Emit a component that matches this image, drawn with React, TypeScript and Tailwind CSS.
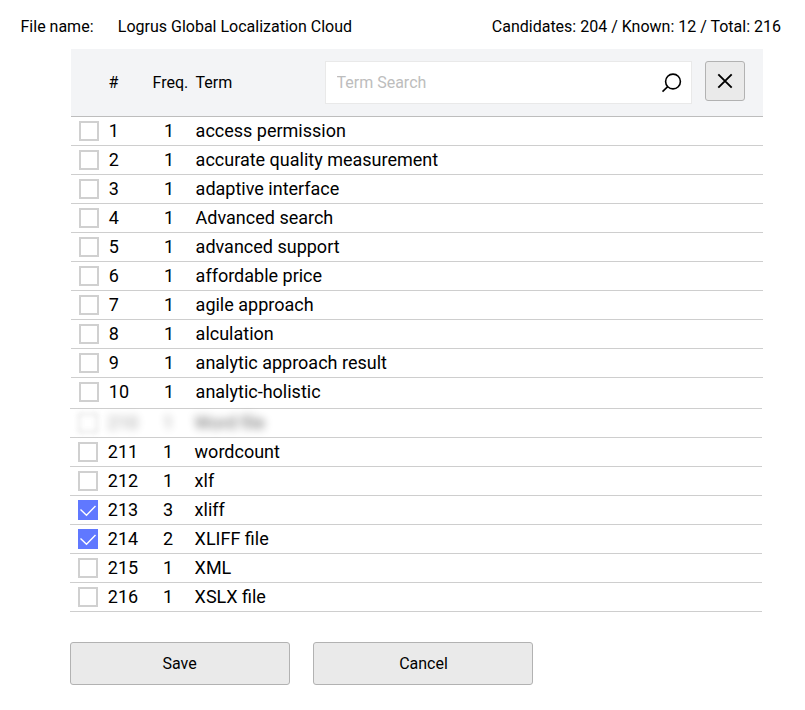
type Term = { id: number; freq: number; term: string; checked?: boolean; blurred?: boolean };

const firstTerms: Term[] = [
  { id: 1, freq: 1, term: "access permission" },
  { id: 2, freq: 1, term: "accurate quality measurement" },
  { id: 3, freq: 1, term: "adaptive interface" },
  { id: 4, freq: 1, term: "Advanced search" },
  { id: 5, freq: 1, term: "advanced support" },
  { id: 6, freq: 1, term: "affordable price" },
  { id: 7, freq: 1, term: "agile approach" },
  { id: 8, freq: 1, term: "alculation" },
  { id: 9, freq: 1, term: "analytic approach result" },
  { id: 10, freq: 1, term: "analytic-holistic" },
];

const lastTerms: Term[] = [
  { id: 210, freq: 1, term: "Word file", blurred: true },
  { id: 211, freq: 1, term: "wordcount" },
  { id: 212, freq: 1, term: "xlf" },
  { id: 213, freq: 3, term: "xliff", checked: true },
  { id: 214, freq: 2, term: "XLIFF file", checked: true },
  { id: 215, freq: 1, term: "XML" },
  { id: 216, freq: 1, term: "XSLX file" },
];

function Checkbox({ checked, blurred }: { checked?: boolean; blurred?: boolean }) {
  if (checked) {
    return (
      <span className="h-5 w-5 shrink-0 bg-[#6078ff]">
        <svg width="20" height="20" viewBox="0 0 20 20" fill="none" stroke="#fff" strokeWidth="1.4">
          <path d="M2.5 9.5 L8.5 15.2 L17.5 6" />
        </svg>
      </span>
    );
  }
  return (
    <span
      className={`h-5 w-5 shrink-0 border-2 border-[#d0d0d0] bg-white ${blurred ? "opacity-60 blur-[2.5px]" : ""}`}
    />
  );
}

function Row({ item }: { item: Term }) {
  const faint = item.blurred ? "opacity-40 blur-[4px]" : "";
  const soft = item.blurred ? "opacity-60 blur-[4px]" : "";
  return (
    <div className="h-[29px] border-b border-[#cecece]">
      <div className="flex h-7 items-center pl-2 text-[18px] leading-7">
        <Checkbox checked={item.checked} blurred={item.blurred} />
        <span className={`w-[50px] pl-[9.8px] ${faint}`}>{item.id}</span>
        <span className={`w-[40px] text-center ${faint}`}>{item.freq}</span>
        <span className={`pl-[6.6px] whitespace-nowrap ${soft}`}>{item.term}</span>
      </div>
    </div>
  );
}

export default function App() {
  return (
    <main className="h-[710px] w-[805px] overflow-hidden bg-white font-['Roboto',sans-serif] text-base text-black">
      <header className="flex h-[49px] items-center pt-1 pr-6 pl-[20.5px] leading-6 whitespace-nowrap">
        <span className="w-[97.3px]">File name:</span>
        <span>Logrus Global Localization Cloud</span>
        <span className="ml-auto">Candidates: 204 / Known: 12 / Total: 216</span>
      </header>

      <section className="ml-[71px] h-[358px] w-[692px] overflow-hidden">
        <div className="flex h-[68px] items-start border-b border-[#bdbdbd] bg-[#f3f4f6] leading-6">
          <span className="mt-[22px] w-[81.5px] pl-[37.5px]">#</span>
          <span className="mt-[22px] w-[43px]">Freq.</span>
          <span className="mt-[22px] w-[129.5px]">Term</span>
          <div className="mt-3 flex h-[43px] w-[367px] items-center border border-[#e9e9e9] bg-white pr-2 pl-[10.5px]">
            <input
              placeholder="Term Search"
              className="min-w-0 flex-1 bg-transparent outline-none placeholder:text-[#bdbdbd]"
            />
            <svg width="22" height="22" viewBox="0 0 22 22" fill="none" stroke="#000" strokeWidth="1.6">
              <circle cx="12" cy="9.5" r="7.4" />
              <path d="M6.7 14.7 L1.5 19.7" />
            </svg>
          </div>
          <button className="mt-3 ml-[13px] flex h-10 w-10 items-center justify-center rounded-[3px] border border-[#b2b2b2] bg-[#eaeaea]">
            <svg width="16" height="16" viewBox="0 0 16 16" fill="none" stroke="#000" strokeWidth="1.9">
              <path d="M1.3 1.3 L14.7 14.7 M14.7 1.3 L1.3 14.7" />
            </svg>
          </button>
        </div>
        {firstTerms.map((item) => (
          <Row key={item.id} item={item} />
        ))}
      </section>

      <section className="-mt-px ml-[70px] w-[693px] bg-white pr-px">
        <div className="h-[3px] border-b border-[#cecece]" />
        {lastTerms.map((item) => (
          <Row key={item.id} item={item} />
        ))}
      </section>

      <footer className="mt-[30px] ml-[70px] flex gap-[23px]">
        <button className="h-[43px] w-[220px] rounded-[3px] border border-[#b2b2b2] bg-[#eaeaea] pr-px">Save</button>
        <button className="h-[43px] w-[220px] rounded-[3px] border border-[#b2b2b2] bg-[#eaeaea] pl-px">Cancel</button>
      </footer>
    </main>
  );
}
